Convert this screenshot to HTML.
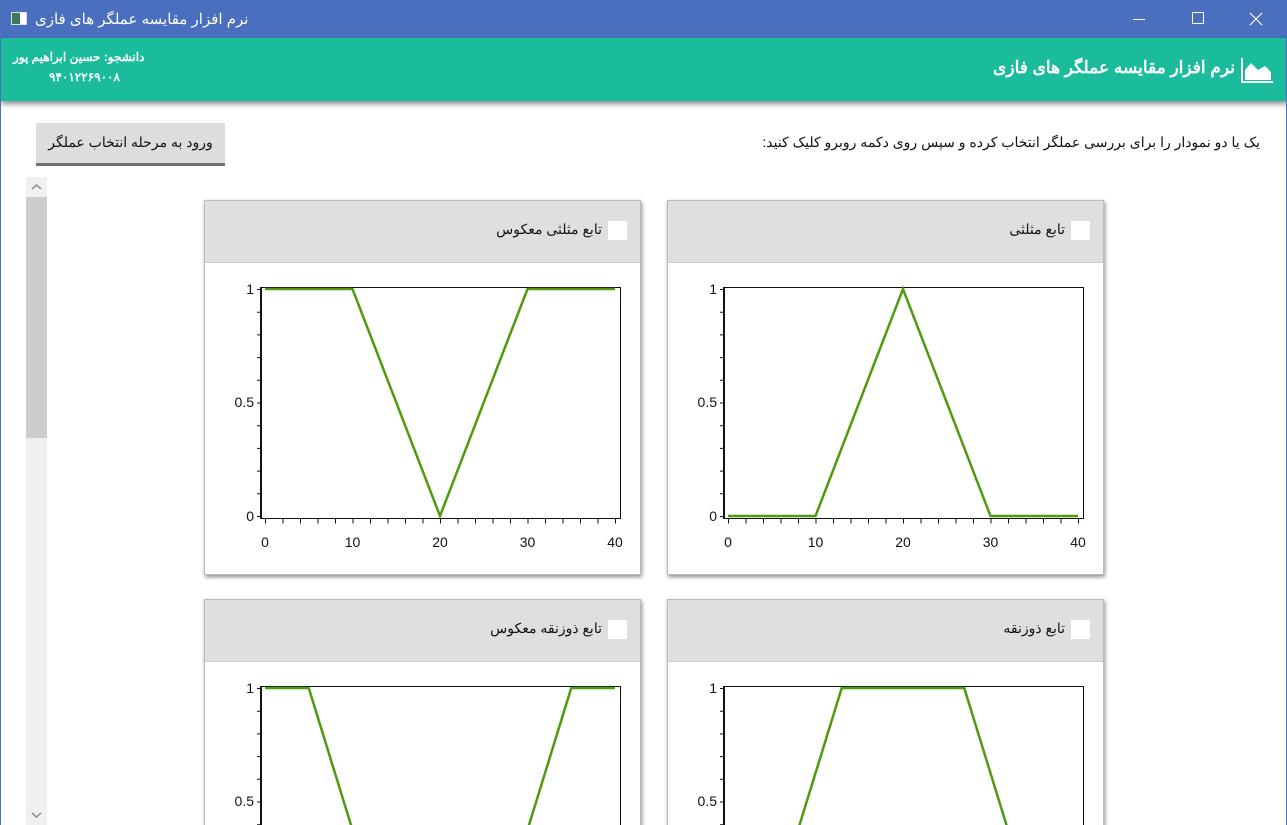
<!DOCTYPE html>
<html style="width:1287px;height:825px;overflow:hidden"><head><meta charset="utf-8"><style>
*{margin:0;padding:0;box-sizing:border-box}
body{width:1287px;height:825px;overflow:hidden;background:#fff;font-family:"Liberation Sans","Noto Sans CJK SC",sans-serif}
#w{position:relative;width:1287px;height:825px;overflow:hidden;border-left:1px solid #4a6fbe;border-right:1px solid #4a6fbe}
.abs{position:absolute}
.tb{left:0;top:0;width:1287px;height:38px;background:#4a6fbe;color:#fff}
.hd{left:0;top:38px;width:1287px;height:63px;background:#1abc9c;box-shadow:0 3px 5px rgba(0,0,0,.45);color:#fff}
.card{width:437px;height:375px;background:#fff;border:1px solid #bbb;box-shadow:1px 2px 4px rgba(0,0,0,.45)}
.ch{position:absolute;left:0;top:0;width:100%;height:62px;background:#dee0e0;border-bottom:1px solid #ccc}
.cb{position:absolute;left:403px;top:20px;width:19px;height:19px;background:#fff}
.ct{position:absolute;right:38px;top:20px;font-size:14px;color:#111;direction:rtl;white-space:nowrap}
svg text{font-family:"Liberation Sans",sans-serif;font-size:14px;fill:#111}
</style></head><body><div id="w">
<div class="abs tb">
 <div class="abs" style="left:10px;top:12px;width:16px;height:13px;background:#fff;border:1px solid #ddd"><div style="width:8px;height:11px;background:#3a7a5a;margin:0"></div></div>
 <div class="abs" style="left:34px;top:10px;font-size:15px;direction:rtl;white-space:nowrap">نرم افزار مقایسه عملگر های فازی</div>
 <div class="abs" style="left:1132px;top:19px;width:12px;height:1px;background:#fff"></div>
 <div class="abs" style="left:1191px;top:12px;width:12px;height:12px;border:1px solid #fff"></div>
 <svg class="abs" style="left:1248px;top:12px" width="14" height="14"><path d="M1 1L13 13M13 1L1 13" stroke="#fff" stroke-width="1.2"/></svg>
</div>
<div class="abs hd">
 <div class="abs" style="left:12px;top:12px;font-size:12px;font-weight:bold;direction:rtl;white-space:nowrap">دانشجو: حسین ابراهیم پور</div>
 <div class="abs" style="left:48px;top:32px;font-size:12px;font-weight:bold">۹۴۰۱۲۲۶۹۰۰۸</div>
 <div class="abs" style="right:53px;top:20px;font-size:17px;font-weight:bold;direction:rtl;white-space:nowrap">نرم افزار مقایسه عملگر های فازی</div>
 <svg class="abs" style="left:1240px;top:20px" width="32" height="25"><path d="M1 0V24H32" stroke="#fff" stroke-width="2" fill="none"/><path d="M4 22V12L10 5L17 12L24 8L30 14V22Z" fill="#fff"/></svg>
</div>
<div class="abs" style="right:26px;top:134px;font-size:14px;color:#111;direction:rtl;white-space:nowrap">یک یا دو نمودار را برای بررسی عملگر انتخاب کرده و سپس روی دکمه روبرو کلیک کنید:</div>
<div class="abs" style="left:35px;top:123px;width:189px;height:43px;background:#dddddd;border-bottom:3px solid #707070;font-size:14px;color:#111;text-align:center;line-height:38px;direction:rtl">ورود به مرحله انتخاب عملگر</div>
<div class="abs" style="left:25px;top:177px;width:21px;height:648px;background:#f0f0f0"></div>
<div class="abs" style="left:25px;top:197px;width:21px;height:241px;background:#cdcdcd"></div>
<svg class="abs" style="left:25px;top:177px" width="21" height="20"><path d="M6 12L10.5 8L15 12" stroke="#888" stroke-width="1.5" fill="none"/></svg>
<svg class="abs" style="left:25px;top:805px" width="21" height="20"><path d="M6 8L10.5 12L15 8" stroke="#888" stroke-width="1.5" fill="none"/></svg>

<div class="abs card" style="left:666px;top:200px">
 <div class="ch"><div class="cb"></div><div class="ct">تابع مثلثی</div></div>
 <svg class="abs" style="left:0;top:0" width="437" height="375">
  <rect x="56.5" y="86.5" width="359" height="231" fill="none" stroke="#111"/>
  <line x1="56" y1="86" x2="56" y2="318" stroke="#111" stroke-width="2"/>
  <line x1="54" y1="88" x2="54" y2="318" stroke="#111" stroke-width="4" stroke-dasharray="1 21.7"/>
  <line x1="60" y1="320" x2="412" y2="320" stroke="#111" stroke-width="5" stroke-dasharray="1 16.5"/>
  <text x="49" y="93" text-anchor="end">1</text><text x="49" y="206" text-anchor="end">0.5</text><text x="49" y="320" text-anchor="end">0</text>
  <text x="60" y="346" text-anchor="middle">0</text><text x="147.5" y="346" text-anchor="middle">10</text><text x="235" y="346" text-anchor="middle">20</text><text x="322.5" y="346" text-anchor="middle">30</text><text x="410" y="346" text-anchor="middle">40</text>
  <polyline points="60,315 147.5,315 235,88 322.5,315 410,315" fill="none" stroke="#4f9a0e" stroke-width="2.5"/>
 </svg>
</div>
<div class="abs card" style="left:203px;top:200px">
 <div class="ch"><div class="cb"></div><div class="ct">تابع مثلثی معکوس</div></div>
 <svg class="abs" style="left:0;top:0" width="437" height="375">
  <rect x="56.5" y="86.5" width="359" height="231" fill="none" stroke="#111"/>
  <line x1="56" y1="86" x2="56" y2="318" stroke="#111" stroke-width="2"/>
  <line x1="54" y1="88" x2="54" y2="318" stroke="#111" stroke-width="4" stroke-dasharray="1 21.7"/>
  <line x1="60" y1="320" x2="412" y2="320" stroke="#111" stroke-width="5" stroke-dasharray="1 16.5"/>
  <text x="49" y="93" text-anchor="end">1</text><text x="49" y="206" text-anchor="end">0.5</text><text x="49" y="320" text-anchor="end">0</text>
  <text x="60" y="346" text-anchor="middle">0</text><text x="147.5" y="346" text-anchor="middle">10</text><text x="235" y="346" text-anchor="middle">20</text><text x="322.5" y="346" text-anchor="middle">30</text><text x="410" y="346" text-anchor="middle">40</text>
  <polyline points="60,88 147.5,88 235,315 322.5,88 410,88" fill="none" stroke="#4f9a0e" stroke-width="2.5"/>
 </svg>
</div>
<div class="abs card" style="left:666px;top:599px">
 <div class="ch"><div class="cb"></div><div class="ct">تابع ذوزنقه</div></div>
 <svg class="abs" style="left:0;top:0" width="437" height="375">
  <rect x="56.5" y="86.5" width="359" height="231" fill="none" stroke="#111"/>
  <line x1="56" y1="86" x2="56" y2="318" stroke="#111" stroke-width="2"/>
  <line x1="54" y1="88" x2="54" y2="318" stroke="#111" stroke-width="4" stroke-dasharray="1 21.7"/>
  <text x="49" y="93" text-anchor="end">1</text><text x="49" y="206" text-anchor="end">0.5</text>
  <polyline points="60,315 103.75,315 173.75,88 296.25,88 366.25,315 410,315" fill="none" stroke="#4f9a0e" stroke-width="2.5"/>
 </svg>
</div>
<div class="abs card" style="left:203px;top:599px">
 <div class="ch"><div class="cb"></div><div class="ct">تابع ذوزنقه معکوس</div></div>
 <svg class="abs" style="left:0;top:0" width="437" height="375">
  <rect x="56.5" y="86.5" width="359" height="231" fill="none" stroke="#111"/>
  <line x1="56" y1="86" x2="56" y2="318" stroke="#111" stroke-width="2"/>
  <line x1="54" y1="88" x2="54" y2="318" stroke="#111" stroke-width="4" stroke-dasharray="1 21.7"/>
  <text x="49" y="93" text-anchor="end">1</text><text x="49" y="206" text-anchor="end">0.5</text>
  <polyline points="60,88 103.75,88 173.75,315 296.25,315 366.25,88 410,88" fill="none" stroke="#4f9a0e" stroke-width="2.5"/>
 </svg>
</div>
</div></body></html>
